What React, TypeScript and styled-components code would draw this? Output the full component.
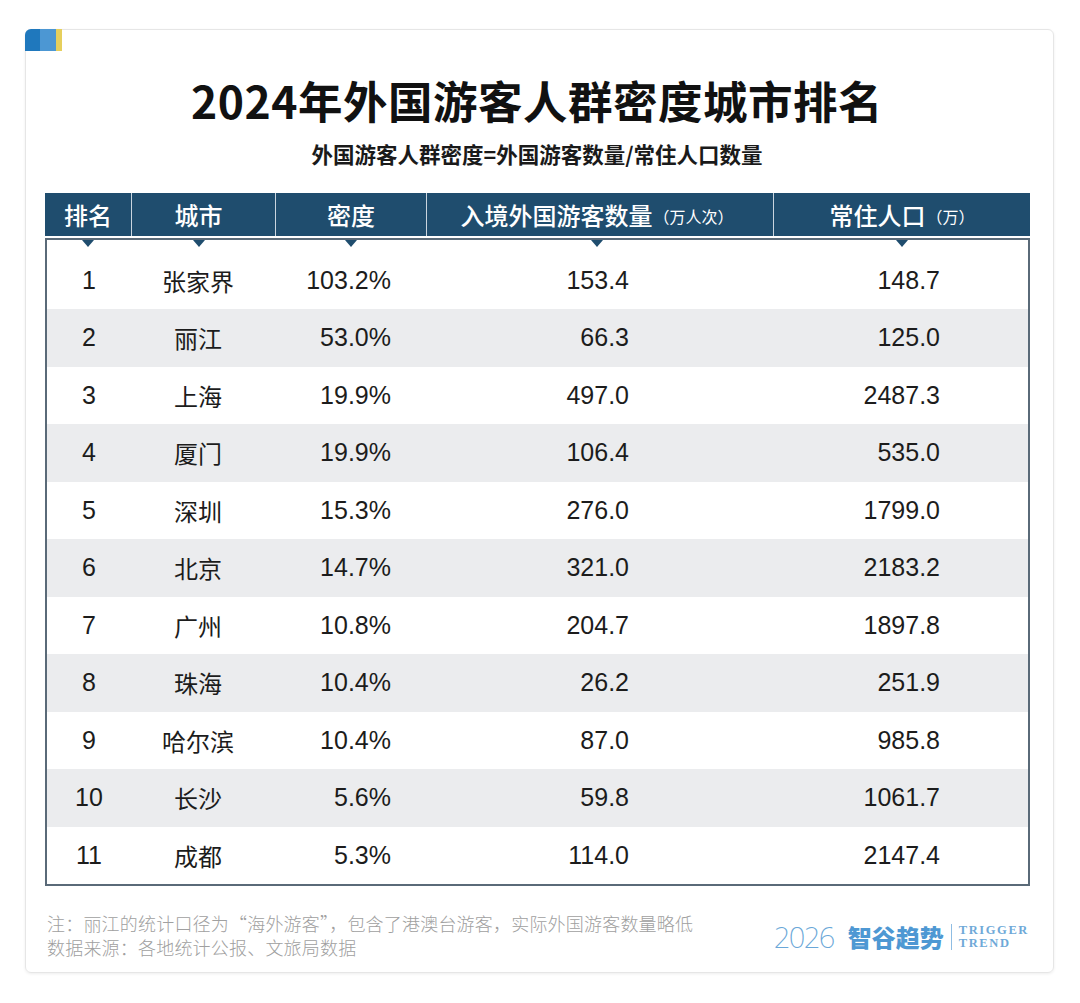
import React from 'react';
import styled, { createGlobalStyle } from 'styled-components';

const GlobalStyle = createGlobalStyle`
  html, body {
    margin: 0;
    padding: 0;
    background: #ffffff;
  }
  body {
    font-family: "Liberation Sans", "Noto Sans CJK SC", sans-serif;
    color: #1c1c1c;
  }
`;

const Page = styled.div`
  width: 1080px;
  height: 1003px;
  padding: 29px 0 0 25px;
  box-sizing: border-box;
`;

const Card = styled.div`
  width: 1029px;
  height: 944px;
  box-sizing: border-box;
  border: 1px solid #e6e6e6;
  border-radius: 6px;
  box-shadow: 0 1px 3px rgba(0, 0, 0, 0.07);
  display: flex;
  flex-direction: column;
  padding: 0 24px 0 19px;
`;

const Tab = styled.div`
  display: flex;
  height: 22px;
  margin: -1px 0 0 -20px;
  width: 37px;
  border-top-left-radius: 6px;
  overflow: hidden;
`;

const TabPart = styled.div<{ $c: string; $w: number }>`
  width: ${(p) => p.$w}px;
  background: ${(p) => p.$c};
`;

const Title = styled.h1`
  margin: 21px 0 0;
  font-family: "Noto Sans CJK SC", sans-serif;
  font-size: 44.5px;
  font-weight: 700;
  line-height: 56px;
  text-align: center;
  color: #111;
  letter-spacing: 0.5px;
`;

const Subtitle = styled.h2`
  margin: 11px 0 0;
  font-family: "Noto Sans CJK SC", sans-serif;
  font-size: 21.5px;
  font-weight: 600;
  line-height: 30px;
  text-align: center;
  color: #1a1a1a;
`;

const HEAD_TEMPLATE = '86px 144px 151px 347px 1fr';
const BODY_TEMPLATE = '84px 144px 151px 347px 1fr';

const HeadRow = styled.div`
  margin-top: 24px;
  display: grid;
  grid-template-columns: ${HEAD_TEMPLATE};
  height: 43px;
  background: #1f4d6e;
  width: 985px;
`;

const HeadCell = styled.div<{ $pr: number; $first?: boolean }>`
  position: relative;
  display: flex;
  align-items: center;
  justify-content: center;
  padding-right: ${(p) => p.$pr}px;
  border-left: ${(p) => (p.$first ? 'none' : '1px solid #c9d5df')};
  font-family: "Noto Sans CJK SC", sans-serif;
  font-size: 24px;
  font-weight: 500;
  color: #ffffff;
  white-space: nowrap;

  &::after {
    content: '';
    position: absolute;
    left: calc(50% - ${(p) => p.$pr / 2 + 6}px);
    top: calc(100% + 4px);
    border-left: 6px solid transparent;
    border-right: 6px solid transparent;
    border-top: 7px solid #1f4d6e;
    z-index: 2;
  }
`;

const Unit = styled.span`
  font-size: 16px;
  font-weight: 400;
  margin-left: 1px;
  margin-top: 3px;
`;

const Body = styled.div`
  margin-top: 2px;
  width: 985px;
  box-sizing: border-box;
  border: 2px solid #5a6a78;
  padding-top: 11.5px;
`;

const Row = styled.div<{ $grey: boolean }>`
  display: grid;
  grid-template-columns: ${BODY_TEMPLATE};
  height: 57.5px;
  background: ${(p) => (p.$grey ? '#ebecee' : '#ffffff')};
`;

const Cell = styled.div<{ $align: string; $pr: number }>`
  display: flex;
  align-items: center;
  justify-content: ${(p) => p.$align};
  padding-right: ${(p) => p.$pr}px;
  font-size: 25px;
  color: #1c1c1c;
`;

const CityText = styled.span`
  font-family: "Noto Sans CJK SC", sans-serif;
  font-size: 24px;
`;

const Footer = styled.div`
  margin-top: 25px;
  display: flex;
  justify-content: space-between;
  align-items: flex-end;
  padding-left: 2px;
`;

const Notes = styled.div`
  font-family: "Noto Sans CJK SC", sans-serif;
  font-size: 18px;
  font-weight: 300;
  line-height: 24px;
  letter-spacing: 0.2px;
  color: #a0a0a0;
`;

const Brand = styled.div`
  display: flex;
  align-items: center;
  color: #5c9fd5;
  margin-bottom: 3px;
`;

const Year = styled.span`
  font-family: "Noto Sans", sans-serif;
  font-size: 29px;
  font-weight: 200;
  letter-spacing: -1.5px;
  color: #6aa7d8;
`;

const BrandName = styled.span`
  margin-left: 14px;
  font-family: "Noto Sans CJK SC", sans-serif;
  font-size: 24px;
  font-weight: 900;
  color: #4e98d3;
`;

const Divider = styled.div`
  width: 1px;
  height: 26px;
  background: #8fbde3;
  margin: 0 7px 0 7px;
`;

const EnName = styled.div`
  font-family: "Liberation Serif", serif;
  font-weight: 700;
  font-size: 12.5px;
  line-height: 13px;
  letter-spacing: 1.6px;
  color: #6fa9d8;
`;

const cols = [
  { align: 'center', pr: 0 },
  { align: 'center', pr: 10 },
  { align: 'flex-end', pr: 35 },
  { align: 'flex-end', pr: 144 },
  { align: 'flex-end', pr: 88 },
];

const data: [string, string, string, string, string][] = [
  ['1', '张家界', '103.2%', '153.4', '148.7'],
  ['2', '丽江', '53.0%', '66.3', '125.0'],
  ['3', '上海', '19.9%', '497.0', '2487.3'],
  ['4', '厦门', '19.9%', '106.4', '535.0'],
  ['5', '深圳', '15.3%', '276.0', '1799.0'],
  ['6', '北京', '14.7%', '321.0', '2183.2'],
  ['7', '广州', '10.8%', '204.7', '1897.8'],
  ['8', '珠海', '10.4%', '26.2', '251.9'],
  ['9', '哈尔滨', '10.4%', '87.0', '985.8'],
  ['10', '长沙', '5.6%', '59.8', '1061.7'],
  ['11', '成都', '5.3%', '114.0', '2147.4'],
];

export default function App() {
  return (
    <Page>
      <GlobalStyle />
      <Card>
        <Tab>
          <TabPart $c="#1f78bd" $w={15} />
          <TabPart $c="#4c97d3" $w={16} />
          <TabPart $c="#e6cf5c" $w={6} />
        </Tab>
        <Title>2024年外国游客人群密度城市排名</Title>
        <Subtitle>外国游客人群密度=外国游客数量/常住人口数量</Subtitle>

        <HeadRow>
          <HeadCell $pr={0} $first>排名</HeadCell>
          <HeadCell $pr={10}>城市</HeadCell>
          <HeadCell $pr={0}>密度</HeadCell>
          <HeadCell $pr={6}>
            入境外国游客数量<Unit>（万人次）</Unit>
          </HeadCell>
          <HeadCell $pr={0}>
            常住人口<Unit>（万）</Unit>
          </HeadCell>
        </HeadRow>

        <Body>
          {data.map((r, i) => (
            <Row key={r[0]} $grey={i % 2 === 1}>
              {r.map((v, j) => (
                <Cell key={j} $align={cols[j].align} $pr={cols[j].pr}>
                  {j === 1 ? <CityText>{v}</CityText> : v}
                </Cell>
              ))}
            </Row>
          ))}
        </Body>

        <Footer>
          <Notes>
            <div>注：丽江的统计口径为“海外游客”，包含了港澳台游客，实际外国游客数量略低</div>
            <div>数据来源：各地统计公报、文旅局数据</div>
          </Notes>
          <Brand>
            <Year>2026</Year>
            <BrandName>智谷趋势</BrandName>
            <Divider />
            <EnName>
              <div>TRIGGER</div>
              <div>TREND</div>
            </EnName>
          </Brand>
        </Footer>
      </Card>
    </Page>
  );
}
